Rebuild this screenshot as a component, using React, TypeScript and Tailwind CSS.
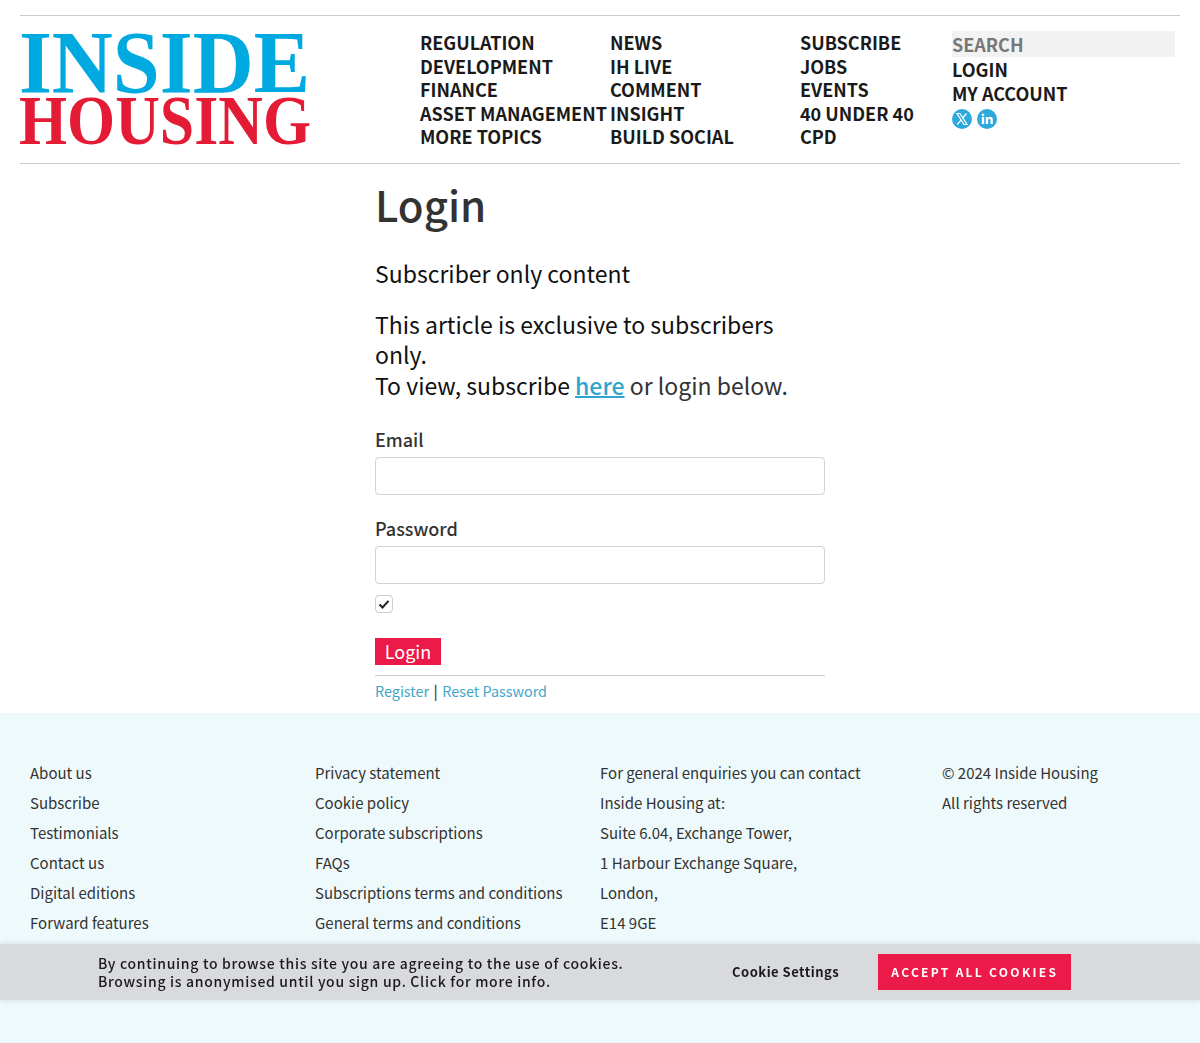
import React from 'react';

const navColumns = [
  { width: 'w-[190px]', links: ['REGULATION', 'DEVELOPMENT', 'FINANCE', 'ASSET MANAGEMENT', 'MORE TOPICS'] },
  { width: 'w-[190px]', links: ['NEWS', 'IH LIVE', 'COMMENT', 'INSIGHT', 'BUILD SOCIAL'] },
  { width: 'w-[152px]', links: ['SUBSCRIBE', 'JOBS', 'EVENTS', '40 UNDER 40', 'CPD'] },
];

const footerColumns = [
  { width: 'w-[285px]', lines: ['About us', 'Subscribe', 'Testimonials', 'Contact us', 'Digital editions', 'Forward features'] },
  { width: 'w-[285px]', lines: ['Privacy statement', 'Cookie policy', 'Corporate subscriptions', 'FAQs', 'Subscriptions terms and conditions', 'General terms and conditions'] },
  { width: 'w-[342px]', lines: ['For general enquiries you can contact', 'Inside Housing at:', 'Suite 6.04, Exchange Tower,', '1 Harbour Exchange Square,', 'London,', 'E14 9GE'] },
  { width: 'w-[230px]', lines: ['© 2024 Inside Housing', 'All rights reserved'] },
];

const Logo = () => (
  <svg width="291" height="114" viewBox="0 0 291 114" className="block overflow-visible">
    <text x="-1" y="60" textLength="291" lengthAdjust="spacingAndGlyphs" fontFamily="Liberation Serif, serif" fontWeight="700" fontSize="88" fill="#00a9e0">
      INSIDE
    </text>
    <text x="-1" y="112" textLength="292" lengthAdjust="spacingAndGlyphs" fontFamily="Liberation Serif, serif" fontWeight="700" fontSize="70" fill="#e31b34">
      HOUSING
    </text>
  </svg>
);

const TwitterIcon = () => (
  <svg width="20" height="20" viewBox="0 0 20 20">
    <circle cx="10" cy="10" r="10" fill="#2ea9dc" />
    <path d="M5 4.500h3l7 11h-3z" fill="none" stroke="#fff" strokeWidth="1.200" />
    <path d="M14.500 4.500l-3.800 4.500M9.200 10.800L5.200 15.500" fill="none" stroke="#fff" strokeWidth="1.200" />
  </svg>
);

const LinkedinIcon = () => (
  <svg width="20" height="20" viewBox="0 0 20 20">
    <circle cx="10" cy="10" r="10" fill="#2ea9dc" />
    <rect x="4.800" y="8" width="2.400" height="7" fill="#fff" />
    <circle cx="6" cy="5.800" r="1.400" fill="#fff" />
    <path d="M8.800 15V8h2.200v1c.5-.8 1.300-1.200 2.300-1.200 1.800 0 2.500 1.100 2.500 3V15h-2.300v-3.700c0-.9-.3-1.400-1.100-1.400s-1.300.6-1.300 1.500V15z" fill="#fff" />
  </svg>
);

const Field = ({ label }: { label: string }) => (
  <div className="mb-[22px]">
    <label className="block text-[18px] leading-[23px] font-medium text-[#333] mb-[6px]">{label}</label>
    <div className="h-[38px] rounded-[4px] border border-[#ced4da] bg-white" />
  </div>
);

export default function App() {
  return (
    <div className="min-h-screen flex flex-col bg-white text-[#333] font-['Noto_Sans_CJK_SC','Noto_Sans',sans-serif]">
      <header className="mx-[20px] mt-[15px] h-[149px] border-y border-[#ccc] flex">
        <div className="w-[400px] pt-[16px]">
          <Logo />
        </div>
        <nav className="flex pt-[15px]">
          {navColumns.map((col) => (
            <ul key={col.links[0]} className={col.width}>
              {col.links.map((link) => (
                <li key={link} className="text-[18px] leading-[23.5px] font-semibold text-[#1a1a1a] whitespace-nowrap">
                  {link}
                </li>
              ))}
            </ul>
          ))}
        </nav>
        <div className="w-[223px] pt-[15px]">
          <div className="h-[26px] bg-[#f2f2f2] text-[18px] leading-[26px] font-semibold text-[#777]">SEARCH</div>
          <div className="text-[18px] leading-[24px] font-semibold text-[#1a1a1a]">LOGIN</div>
          <div className="text-[18px] leading-[24px] font-semibold text-[#1a1a1a]">MY ACCOUNT</div>
          <div className="flex gap-[5px] mt-[4px]">
            <TwitterIcon />
            <LinkedinIcon />
          </div>
        </div>
      </header>

      <main className="w-[450px] mx-auto">
        <h1 className="text-[42px] leading-[50px] font-medium mt-[15px] text-[#333]">Login</h1>
        <p className="text-[23px] leading-[30.5px] text-[#111] mt-[29px]">Subscriber only content</p>
        <p className="text-[23px] leading-[30.5px] text-[#111] mt-[20px] w-[430px]">
          This article is exclusive to subscribers only.
          <br />
          To view, subscribe <a className="text-[#2ea5cc] underline decoration-2 font-medium">here</a> <span className="text-[#333]">or login below.</span>
        </p>
        <div className="mt-[28px]">
          <Field label="Email" />
          <Field label="Password" />
        </div>
        <div className="-mt-[11px] w-[18px] h-[18px] rounded-[4px] border border-[#ccc] flex items-center justify-center">
          <svg width="12" height="12" viewBox="0 0 12 12">
            <path d="M1.500 6.500L4.500 9.500L10.500 2.800" fill="none" stroke="#222" strokeWidth="2" />
          </svg>
        </div>
        <button className="block mt-[25px] h-[27px] w-[66px] bg-[#ec1a48] text-white text-[18px] leading-[27px]">Login</button>
        <div className="mt-[10px] pt-[3px] border-t border-[#ccc] text-[14.400px] leading-[24px] h-[38px]">
          <a className="text-[#3fa6c9]">Register</a>
          <span className="text-[#555] font-bold mx-[4.500px]">|</span>
          <a className="text-[#3fa6c9]">Reset Password</a>
        </div>
      </main>

      <footer className="flex-1 bg-[#eef9fc] pt-[45px] pl-[30px] flex text-[15px] leading-[30px] text-[#333]">
        {footerColumns.map((col) => (
          <ul key={col.lines[0]} className={col.width}>
            {col.lines.map((line) => (
              <li key={line} className="whitespace-nowrap">{line}</li>
            ))}
          </ul>
        ))}
      </footer>

      {/* cookie banner sits over the footer */}
      <div className="fixed left-0 right-0 top-[944px] h-[56px] bg-[#d8dade] flex items-center shadow-[0_0_6px_rgba(0,0,0,0.12)]">
        <p className="ml-[98px] w-[600px] text-[14px] leading-[18px] tracking-[0.7px] font-medium text-[#1a1a1a]">
          By continuing to browse this site you are agreeing to the use of cookies.
          <br />
          Browsing is anonymised until you sign up. Click for more info.
        </p>
        <span className="ml-[34px] text-[13px] font-bold tracking-[0.5px] text-[#1a1a1a] whitespace-nowrap">Cookie Settings</span>
        <button className="ml-[39px] w-[193px] h-[36px] bg-[#ec1a48] text-white text-[12px] font-bold tracking-[2.300px] whitespace-nowrap">ACCEPT ALL COOKIES</button>
      </div>
    </div>
  );
}
